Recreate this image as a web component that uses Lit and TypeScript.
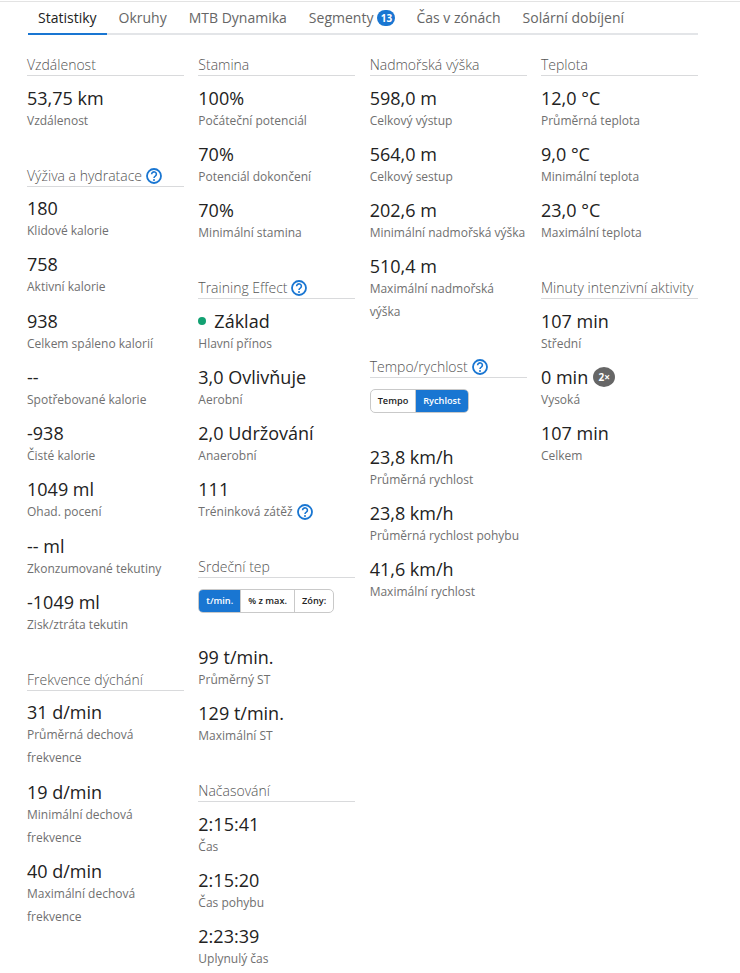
import { LitElement, html, css, nothing } from "lit";
import { customElement } from "lit/decorators.js";

const help = html`<svg class="help" viewBox="0 0 16 16" width="16" height="16" aria-hidden="true">
  <circle cx="8" cy="8" r="7" fill="none" stroke="#1976d2" stroke-width="1.8"></circle>
  <path d="M5.6 6.2a2.4 2.3 0 1 1 3.7 1.9c-.8.5-1.3 1-1.3 1.9" fill="none" stroke="#1976d2" stroke-width="1.6"></path>
  <circle cx="8" cy="12" r="1" fill="#1976d2"></circle>
</svg>`;

type Item = { v: unknown; l: string; h?: boolean };

@customElement("app-root")
export class AppRoot extends LitElement {
  static styles = css`
    :host { display: block; font-family: "Open Sans", sans-serif; color: #222; background: #fff; height: 973px; overflow: hidden; }
    .top { border-top: 1px solid #e3e3e3; margin-top: 1px; }
    .wrap { padding: 0 42px 0 27px; }
    .tabs { display: flex; gap: 2px; height: 31px; border-bottom: 2px solid #e3e5e8; margin-left: 1px; }
    .tab { padding: 0 10px; height: 31px; font-size: 14px; color: #666; display: flex; align-items: center; white-space: nowrap; border-bottom: 2px solid transparent; box-sizing: content-box; }
    .tab.on { color: #222; border-bottom-color: #1976d2; }
    .badge { display: inline-block; background: #1976d2; color: #fff; border-radius: 9px; width: 18px; height: 16px; line-height: 16px; font-size: 10px; font-weight: 700; text-align: center; margin-left: 4px; margin-right: -1px; }
    .cols { display: grid; grid-template-columns: repeat(4, 157px); column-gap: 14.33px; margin-top: 20px; }
    .sec { margin-bottom: 34px; }
    h3 { margin: 0 0 12.5px; font-size: 14px; font-weight: 300; line-height: 20px; color: #555; border-bottom: 1px solid #d9dadc; height: 20px; display: flex; align-items: center; gap: 4px; white-space: nowrap; }
    .help { flex: none; }
    .item { margin-bottom: 13.25px; }
    .v { font-size: 18px; line-height: 19px; height: 19px; margin-bottom: 1px; color: #222; display: flex; align-items: center; white-space: nowrap; }
    .l { font-size: 12px; line-height: 23px; color: #707070; display: flex; align-items: center; gap: 4px; }
    .dot { width: 8px; height: 8px; border-radius: 50%; background: #12a172; margin: 0 8px 0 0; }
    .x { display: inline-block; flex: none; background: #666; color: #fff; border-radius: 50%; width: 22px; height: 20px; line-height: 20px; font-size: 10px; font-weight: 700; text-align: center; margin-left: 5px; }
    .seg { display: inline-flex; height: 24px; border: 1px solid #c9c9c9; border-radius: 5px; box-sizing: border-box; font-size: 9.2px; overflow: hidden; vertical-align: top; }
    .seg span { padding: 0 7px; line-height: 22px; border-left: 1px solid #c9c9c9; color: #222; font-weight: 600; white-space: nowrap; }
    .seg span:first-child { border-left: 0; }
    .seg span.on { background: #1976d2; color: #fff; }
    .ctl { display: block; height: 24px; margin: -1.5px 0 34.5px; }
  `;

  section(title: string, items: Item[], opts: { help?: boolean; seg?: { t: string; on?: boolean }[] } = {}) {
    return html`<div class="sec">
      <h3>${title}${opts.help ? help : nothing}</h3>
      ${opts.seg ? html`<div class="ctl"><div class="seg">${opts.seg.map((s) => html`<span class=${s.on ? "on" : ""}>${s.t}</span>`)}</div></div>` : nothing}
      ${items.map((i) => html`<div class="item"><div class="v">${i.v}</div><div class="l"><span>${i.l}</span>${i.h ? help : nothing}</div></div>`)}
    </div>`;
  }

  render() {
    const tabs = ["Statistiky", "Okruhy", "MTB Dynamika", "Segmenty", "Čas v zónách", "Solární dobíjení"];
    return html`<div class="top"></div><div class="wrap">
      <div class="tabs">${tabs.map((t, i) => html`<div class="tab ${i === 0 ? "on" : ""}">${t}${i === 3 ? html`<span class="badge">13</span>` : nothing}</div>`)}</div>
      <div class="cols">
        <div>
          ${this.section("Vzdálenost", [{ v: "53,75 km", l: "Vzdálenost" }])}
          ${this.section("Výživa a hydratace", [
            { v: "180", l: "Klidové kalorie" },
            { v: "758", l: "Aktivní kalorie" },
            { v: "938", l: "Celkem spáleno kalorií" },
            { v: "--", l: "Spotřebované kalorie" },
            { v: "-938", l: "Čisté kalorie" },
            { v: "1049 ml", l: "Ohad. pocení" },
            { v: "-- ml", l: "Zkonzumované tekutiny" },
            { v: "-1049 ml", l: "Zisk/ztráta tekutin" },
          ], { help: true })}
          ${this.section("Frekvence dýchání", [
            { v: "31 d/min", l: "Průměrná dechová frekvence" },
            { v: "19 d/min", l: "Minimální dechová frekvence" },
            { v: "40 d/min", l: "Maximální dechová frekvence" },
          ])}
        </div>
        <div>
          ${this.section("Stamina", [
            { v: "100%", l: "Počáteční potenciál" },
            { v: "70%", l: "Potenciál dokončení" },
            { v: "70%", l: "Minimální stamina" },
          ])}
          ${this.section("Training Effect", [
            { v: html`<span class="dot"></span>Základ`, l: "Hlavní přínos" },
            { v: "3,0 Ovlivňuje", l: "Aerobní" },
            { v: "2,0 Udržování", l: "Anaerobní" },
            { v: "111", l: "Tréninková zátěž", h: true },
          ], { help: true })}
          ${this.section("Srdeční tep", [
            { v: "99 t/min.", l: "Průměrný ST" },
            { v: "129 t/min.", l: "Maximální ST" },
          ], { seg: [{ t: "t/min.", on: true }, { t: "% z max." }, { t: "Zóny:" }] })}
          ${this.section("Načasování", [
            { v: "2:15:41", l: "Čas" },
            { v: "2:15:20", l: "Čas pohybu" },
            { v: "2:23:39", l: "Uplynulý čas" },
          ])}
        </div>
        <div>
          ${this.section("Nadmořská výška", [
            { v: "598,0 m", l: "Celkový výstup" },
            { v: "564,0 m", l: "Celkový sestup" },
            { v: "202,6 m", l: "Minimální nadmořská výška" },
            { v: "510,4 m", l: "Maximální nadmořská výška" },
          ])}
          ${this.section("Tempo/rychlost", [
            { v: "23,8 km/h", l: "Průměrná rychlost" },
            { v: "23,8 km/h", l: "Průměrná rychlost pohybu" },
            { v: "41,6 km/h", l: "Maximální rychlost" },
          ], { help: true, seg: [{ t: "Tempo" }, { t: "Rychlost", on: true }] })}
        </div>
        <div>
          ${this.section("Teplota", [
            { v: "12,0 °C", l: "Průměrná teplota" },
            { v: "9,0 °C", l: "Minimální teplota" },
            { v: "23,0 °C", l: "Maximální teplota" },
          ])}
          ${this.section("Minuty intenzivní aktivity", [
            { v: "107 min", l: "Střední" },
            { v: html`0 min<span class="x">2×</span>`, l: "Vysoká" },
            { v: "107 min", l: "Celkem" },
          ])}
        </div>
      </div>
    </div>`;
  }
}
